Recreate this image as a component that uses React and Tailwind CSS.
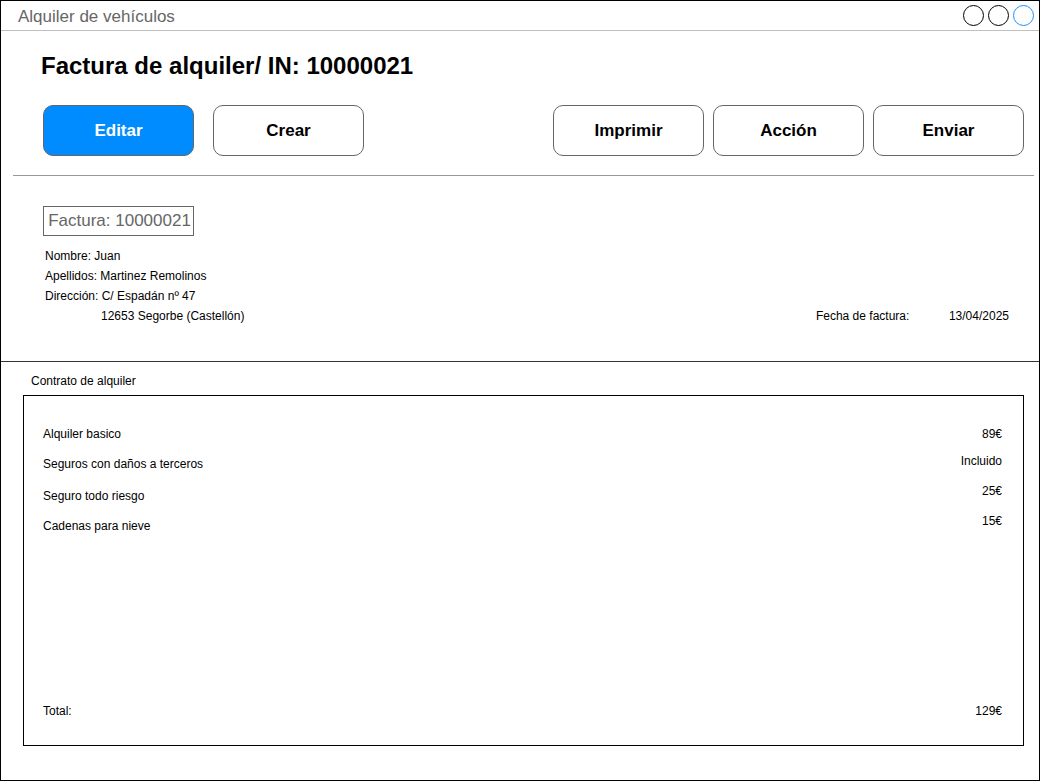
import React from 'react';

const Button = ({ label, primary }) => (
    <button
        className={`w-[151px] h-[51px] rounded-[10px] border border-[#666] text-[17px] font-bold ${primary ? 'bg-[#008cff] text-white' : 'bg-white text-black'}`}
    >
        {label}
    </button>
);

const App = () => {
    return (
        <div className="w-[1040px] h-[781px] bg-white font-['Liberation_Sans',Arial,sans-serif] text-black">
            <div className="w-[1040px] h-[781px] border border-black flex flex-col">
                {/* barra de titulo */}
                <div className="h-[30px] border-b border-[#c0c0c0] flex items-center justify-between pl-[17px] pr-[5px] shrink-0">
                    <span className="text-[17px] text-[#666] pt-[3px]">Alquiler de vehículos</span>
                    <div className="flex gap-[4px]">
                        <span className="w-[21px] h-[21px] rounded-full border border-black"></span>
                        <span className="w-[21px] h-[21px] rounded-full border border-black"></span>
                        <span className="w-[21px] h-[21px] rounded-full border border-[#1e90ff]"></span>
                    </div>
                </div>

                <div className="pl-[12px] pr-[5px]">
                    <h1 className="pl-[28px] pt-[20px] text-[24px] font-bold leading-[30px]">Factura de alquiler/ IN: 10000021</h1>
                    <div className="flex justify-between pl-[30px] pr-[10px] mt-[24px]">
                        <div className="flex gap-[19px]">
                            <Button label="Editar" primary />
                            <Button label="Crear" />
                        </div>
                        <div className="flex gap-[9px]">
                            <Button label="Imprimir" />
                            <Button label="Acción" />
                            <Button label="Enviar" />
                        </div>
                    </div>
                    <div className="mt-[19px] border-t border-[#999]"></div>
                </div>

                <div className="pl-[42px] pr-[30px] pt-[30px] h-[185px] shrink-0">
                    <div className="w-[151px] h-[30px] border border-[#666] text-[17px] text-[#666] flex items-center justify-center pl-[2px]">
                        Factura: 10000021
                    </div>
                    <div className="mt-[10px] text-[12px] leading-[20px] pl-[2px]">
                        <div>Nombre: Juan</div>
                        <div>Apellidos: Martinez Remolinos</div>
                        <div>Dirección: C/ Espadán nº 47</div>
                        <div className="flex justify-between">
                            <span className="pl-[56px]">12653 Segorbe (Castellón)</span>
                            <span className="flex">
                                <span className="w-[133px]">Fecha de factura:</span>
                                <span>13/04/2025</span>
                            </span>
                        </div>
                    </div>
                </div>

                <div className="border-t border-[#333]"></div>

                <div className="pl-[22px] pr-[15px]">
                    <div className="pl-[8px] pt-[12px] text-[12px] leading-[14px]">Contrato de alquiler</div>
                    <div className="mt-[7px] h-[351px] border border-black pl-[19px] pr-[21px] flex flex-col text-[12px] leading-[14px]">
                        <div className="mt-[31px] flex flex-col">
                            <div className="flex justify-between">
                                <span>Alquiler basico</span>
                                <span>89€</span>
                            </div>
                            <div className="flex justify-between items-start mt-[13px]">
                                <span className="mt-[3px]">Seguros con daños a terceros</span>
                                <span>Incluido</span>
                            </div>
                            <div className="flex justify-between items-start mt-[13px]">
                                <span className="mt-[5px]">Seguro todo riesgo</span>
                                <span>25€</span>
                            </div>
                            <div className="flex justify-between items-start mt-[11px]">
                                <span className="mt-[5px]">Cadenas para nieve</span>
                                <span>15€</span>
                            </div>
                        </div>
                        <div className="mt-auto mb-[27px] flex justify-between">
                            <span>Total:</span>
                            <span>129€</span>
                        </div>
                    </div>
                </div>
            </div>
        </div>
    );
};

export default App;
